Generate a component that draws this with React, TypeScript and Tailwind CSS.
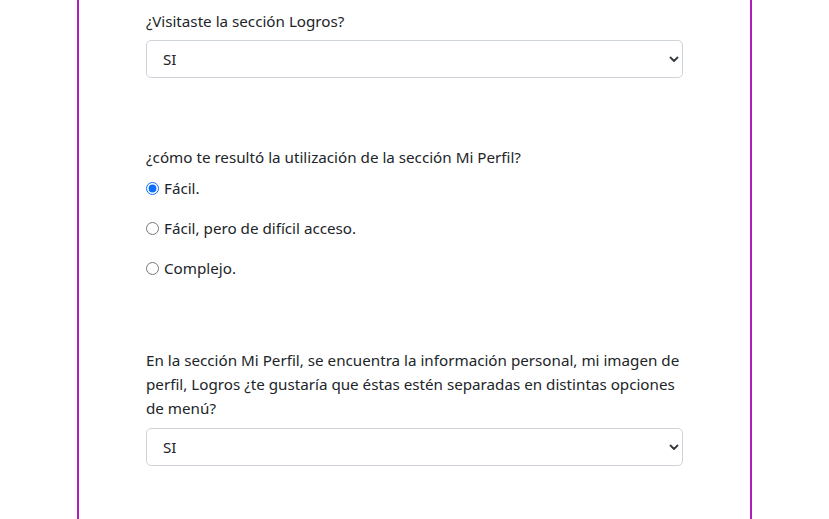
import React, { useState } from 'react';

const Chevron = () => (
  <svg
    className="pointer-events-none absolute right-[1px] top-1/2 -translate-y-1/2"
    width="16"
    height="12"
    viewBox="0 0 16 12"
  >
    <path d="M4.5 4.5 8 8l3.5-3.5" fill="none" stroke="#343a40" strokeWidth="1.8" strokeLinecap="round" strokeLinejoin="round" />
  </svg>
);

const Select = ({ value }: { value: string }) => (
  <div className="relative">
    <select
      defaultValue={value}
      className="block h-[38px] w-full appearance-none rounded-[5px] border border-[#ced4da] bg-white pl-4 pr-9 text-[15.2px] text-[#212529] outline-none"
    >
      <option>SI</option>
      <option>NO</option>
    </select>
    <Chevron />
  </div>
);

const options = ['Fácil.', 'Fácil, pero de difícil acceso.', 'Complejo.'];

export default function App() {
  const [choice, setChoice] = useState(0);

  return (
    <div
      className="min-h-[519px] w-[829px] bg-white text-[15.2px] leading-6 text-[#212529]"
      style={{ fontFamily: '"Noto Sans", "Open Sans", sans-serif' }}
    >
      <div className="ml-[77px] min-h-[519px] w-[675px] border-x-2 border-[#b01db8] px-[67px] pt-[9px]">
        <p className="mb-[7px]">¿Visitaste la sección Logros?</p>
        <Select value="SI" />

        <p className="mb-[7px] mt-[67px]">¿cómo te resultó la utilización de la sección Mi Perfil?</p>
        <div className="flex flex-col gap-4">
          {options.map((o, i) => (
            <label key={o} className="flex items-center gap-[5px]">
              <input
                type="radio"
                name="perfil"
                checked={choice === i}
                onChange={() => setChoice(i)}
                className="m-0 h-[13px] w-[13px] accent-[#0d6efd]"
              />
              <span>{o}</span>
            </label>
          ))}
        </div>

        <p className="mb-2 mt-[68px] whitespace-nowrap">
          En la sección Mi Perfil, se encuentra la información personal, mi imagen de
          <br />
          perfil, Logros ¿te gustaría que éstas estén separadas en distintas opciones
          <br />
          de menú?
        </p>
        <Select value="SI" />
      </div>
    </div>
  );
}
